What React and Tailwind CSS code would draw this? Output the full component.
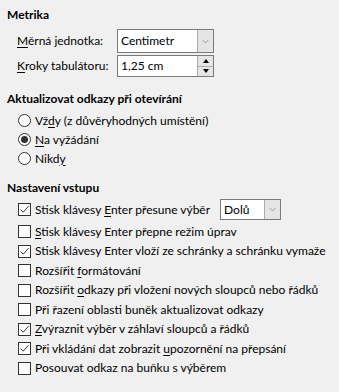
import { ChevronDown } from "lucide-react";

const U = ({ children }) => <span className="underline underline-offset-2">{children}</span>;

const Checkbox = ({ checked }) => (
  <span className="w-[13px] h-[13px] border border-[#333] bg-white flex items-center justify-center shrink-0">
    {checked && (
      <svg width="11" height="11" viewBox="0 0 11 11">
        <path d="M1.5 5.5 L4.2 8.2 L9.5 2.2" fill="none" stroke="#333" strokeWidth="1" />
      </svg>
    )}
  </span>
);

const Radio = ({ checked }) => (
  <span className="w-[13px] h-[13px] rounded-full border border-[#333] bg-white flex items-center justify-center shrink-0">
    {checked && <span className="w-[7px] h-[7px] rounded-full bg-[#333]" />}
  </span>
);

const Combo = ({ value, className }) => (
  <div className={`flex border border-[#7a7a7a] bg-white ${className}`}>
    <div className="flex-1 pl-[3px] flex items-center">{value}</div>
    <div className="w-[16px] bg-[#e5e5e5] border-l border-[#adadad] flex items-center justify-center text-[#606060]">
      <ChevronDown size={11} strokeWidth={1.2} />
    </div>
  </div>
);

const Spin = ({ value }) => (
  <div className="flex border border-[#7a7a7a] bg-white w-[97px] h-[22px]">
    <div className="flex-1 pl-[3px] flex items-center">{value}</div>
    <div className="w-[16px] flex flex-col border-l border-[#adadad]">
      <div className="flex-1 bg-[#e5e5e5] border-b border-[#adadad] flex items-center justify-center">
        <span className="w-0 h-0 border-l-[3px] border-r-[3px] border-b-[4px] border-l-transparent border-r-transparent border-b-black" />
      </div>
      <div className="flex-1 bg-[#e5e5e5] flex items-center justify-center">
        <span className="w-0 h-0 border-l-[3px] border-r-[3px] border-t-[4px] border-l-transparent border-r-transparent border-t-black" />
      </div>
    </div>
  </div>
);

const checks = [
  [false, <><U>S</U>tisk klávesy Enter přepne režim úprav</>],
  [true, <>Stisk klávesy Enter vloží ze schránky a schránku vymaže</>],
  [false, <>Rozšířit <U>f</U>ormátování</>],
  [false, <>Rozšířit <U>o</U>dkazy při vložení nových sloupců nebo řádků</>],
  [false, <>Při řazení oblasti buněk aktualizovat odkazy</>],
  [true, <><U>Z</U>výraznit výběr v záhlaví sloupců a řádků</>],
  [true, <>Při vkládání dat zobrazit <U>u</U>pozornění na přepsání</>],
  [false, <>Posouvat odkaz na buňku s výběrem</>],
];

export default function App() {
  return (
    <div className="w-[339px] h-[392px] bg-[#f0f0f0] text-[12px] leading-[16px] text-black font-['Lato',sans-serif] whitespace-nowrap px-[7px] pt-[7px]">
      <div className="font-bold">Metrika</div>
      <div className="pl-[10px] mt-[6px] flex flex-col gap-[2px]">
        <div className="flex items-center">
          <span className="w-[100px]"><U>M</U>ěrná jednotka:</span>
          <Combo value="Centimetr" className="w-[97px] h-[24px]" />
        </div>
        <div className="flex items-center">
          <span className="w-[100px]"><U>K</U>roky tabulátoru:</span>
          <Spin value="1,25 cm" />
        </div>
      </div>

      <div className="font-bold mt-[14px]">Aktualizovat odkazy při otevírání</div>
      <div className="pl-[11px] mt-[4px] flex flex-col">
        <div className="flex items-center gap-[4px] h-[19px]"><Radio /><span>Vž<U>d</U>y (z důvěryhodných umístění)</span></div>
        <div className="flex items-center gap-[4px] h-[19px]"><Radio checked /><span><U>N</U>a vyžádání</span></div>
        <div className="flex items-center gap-[4px] h-[19px]"><Radio /><span>Nikd<U>y</U></span></div>
      </div>

      <div className="font-bold mt-[12px]">Nastavení vstupu</div>
      <div className="pl-[11px] mt-[1px] flex flex-col">
        <div className="flex items-center gap-[4px] h-[25px]">
          <Checkbox checked />
          <span>Stisk klávesy <U>E</U>nter přesune výběr</span>
          <Combo value="Dolů" className="w-[61px] h-[21px] ml-[6px]" />
        </div>
        {checks.map(([c, t], i) => (
          <div key={i} className="flex items-center gap-[4px] h-[19.5px]">
            <Checkbox checked={c} />
            <span>{t}</span>
          </div>
        ))}
      </div>
    </div>
  );
}
